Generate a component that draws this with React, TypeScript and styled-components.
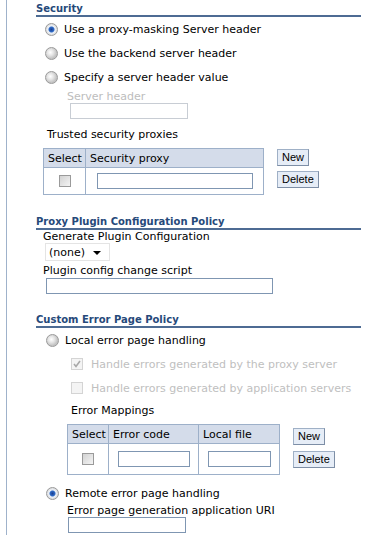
import styled, { createGlobalStyle } from 'styled-components'

const GlobalStyle = createGlobalStyle`
  body {
    margin: 0;
    background: #ffffff;
    font-family: "DejaVu Sans", Verdana, sans-serif;
    font-size: 11px;
    color: #000000;
  }
`;

const Page = styled.div`
  margin-left: 6px;
  border-left: 1px solid #9fb2cb;
  padding: 1px 0 2px 29px;
  width: 325px;
`;

const SectionTitle = styled.div<{ $top: number }>`
  margin-top: ${(p) => p.$top}px;
  font-size: 10px;
  font-weight: bold;
  line-height: 13px;
  color: #26497a;
  border-bottom: 2px solid #4d6b93;
`;

const Block = styled.div<{ $indent: number; $top?: number }>`
  margin-left: ${(p) => p.$indent}px;
  margin-top: ${(p) => p.$top ?? 0}px;
`;

const OptionRow = styled.label<{ $disabled?: boolean; $gap?: number }>`
  display: flex;
  align-items: center;
  height: 24px;
  gap: ${(p) => p.$gap ?? 6}px;
  color: ${(p) => (p.$disabled ? '#c0c0c0' : '#000000')};
`;

const Radio = styled.span<{ $on?: boolean }>`
  box-sizing: border-box;
  width: 13px;
  height: 13px;
  border-radius: 50%;
  border: 1px solid #9a9a9a;
  background: ${(p) =>
    p.$on
      ? 'radial-gradient(circle at 50% 50%, #1b3f8f 0, #2f6bc8 2.5px, #eef2f8 3.5px, #d8d8d8 6px)'
      : 'radial-gradient(circle at 40% 40%, #ffffff 0, #e6e6e6 3px, #c4c4c4 6px)'};
  flex: none;
`;

const Check = styled.span<{ $disabled?: boolean }>`
  box-sizing: border-box;
  width: 12px;
  height: 12px;
  border: 1px solid ${(p) => (p.$disabled ? '#d4d4d4' : '#9a9a9a')};
  background: ${(p) =>
    p.$disabled ? '#f4f4f4' : 'linear-gradient(135deg, #d2d2d2 0%, #f4f4f4 100%)'};
  display: flex;
  align-items: center;
  justify-content: center;
  flex: none;
`;

const Label = styled.div<{ $disabled?: boolean; $top?: number; $lh?: number }>`
  margin-top: ${(p) => p.$top ?? 0}px;
  line-height: ${(p) => p.$lh ?? 13}px;
  color: ${(p) => (p.$disabled ? '#bdbdbd' : '#000000')};
`;

const TextBox = styled.div<{ $w: number; $disabled?: boolean; $top?: number; $left?: number }>`
  box-sizing: border-box;
  margin-top: ${(p) => p.$top ?? 0}px;
  margin-left: ${(p) => p.$left ?? 0}px;
  width: ${(p) => p.$w}px;
  height: 16px;
  border: 1px solid ${(p) => (p.$disabled ? '#c8cdd4' : '#7f96b2')};
  background: #ffffff;
`;

const TableRow = styled.div<{ $top: number }>`
  display: flex;
  align-items: flex-start;
  gap: 13px;
  margin-top: ${(p) => p.$top}px;
`;

const Grid = styled.table<{ $w: number }>`
  width: ${(p) => p.$w}px;
  table-layout: fixed;
  border-collapse: collapse;
  border: 1px solid #9db0c9;
  font-size: 11px;
  flex: none;
`;

const Th = styled.th<{ $w: number }>`
  width: ${(p) => p.$w}px;
  height: 18px;
  padding: 0 4px;
  background: #d4dcea;
  border: 1px solid #9db0c9;
  font-weight: normal;
  text-align: left;
  white-space: nowrap;
`;

const Td = styled.td<{ $h: number }>`
  height: ${(p) => p.$h}px;
  padding: 0;
  border: 1px solid #9db0c9;
  border-top-color: #c3cfdf;
  vertical-align: middle;
`;

const CellBox = styled.div`
  display: flex;
  justify-content: center;
  align-items: center;
`;

const Buttons = styled.div<{ $top: number; $gap: number }>`
  display: flex;
  flex-direction: column;
  align-items: flex-start;
  gap: ${(p) => p.$gap}px;
  margin-top: ${(p) => p.$top}px;
`;

const Button = styled.button`
  font-family: "Liberation Sans", Arial, sans-serif;
  font-size: 11px;
  height: 17px;
  padding: 0 4px;
  line-height: 15px;
  color: #000000;
  background: #e6edf7;
  border: 1px solid #9fb0c6;
  border-right-color: #7d8ea6;
  border-bottom-color: #7d8ea6;
  border-radius: 0;
`;

const Select = styled.div`
  box-sizing: border-box;
  display: flex;
  align-items: center;
  gap: 8px;
  width: 65px;
  height: 18px;
  margin-left: 2px;
  padding-left: 3px;
  border: 1px solid #e4e4e4;
`;

const Arrow = styled.span`
  width: 0;
  height: 0;
  border-left: 4px solid transparent;
  border-right: 4px solid transparent;
  border-top: 4px solid #000000;
  margin-top: 2px;
`;

function CheckMark() {
  return (
    <svg width="8" height="8" viewBox="0 0 8 8">
      <path d="M1 4 L3 6.5 L7 1" fill="none" stroke="#a8a8a8" strokeWidth="1.6" />
    </svg>
  )
}

function App() {
  return (
    <>
      <GlobalStyle />
      <Page>
        <SectionTitle $top={1}>Security</SectionTitle>
        <Block $indent={9} $top={0}>
          <OptionRow><Radio $on />Use a proxy-masking Server header</OptionRow>
          <OptionRow><Radio />Use the backend server header</OptionRow>
          <OptionRow><Radio />Specify a server header value</OptionRow>
        </Block>
        <Block $indent={31}>
          <Label $disabled $top={1}>Server header</Label>
          <TextBox $w={118} $disabled $left={3} />
        </Block>
        <Block $indent={11}>
          <Label $top={9}>Trusted security proxies</Label>
        </Block>
        <Block $indent={7}>
          <TableRow $top={7}>
            <Grid $w={220}>
              <thead>
                <tr>
                  <Th $w={33}>Select</Th>
                  <Th $w={169}>Security proxy</Th>
                </tr>
              </thead>
              <tbody>
                <tr>
                  <Td $h={26}><CellBox><Check /></CellBox></Td>
                  <Td $h={26}><CellBox><TextBox $w={156} /></CellBox></Td>
                </tr>
              </tbody>
            </Grid>
            <Buttons $top={1} $gap={5}>
              <Button>New</Button>
              <Button>Delete</Button>
            </Buttons>
          </TableRow>
        </Block>

        <SectionTitle $top={20}>Proxy Plugin Configuration Policy</SectionTitle>
        <Block $indent={7}>
          <Label $top={1} $lh={12}>Generate Plugin Configuration</Label>
          <Select>(none)<Arrow /></Select>
          <Label $top={3}>Plugin config change script</Label>
          <TextBox $w={227} $top={1} $left={3} />
        </Block>

        <SectionTitle $top={19}>Custom Error Page Policy</SectionTitle>
        <Block $indent={10}>
          <OptionRow><Radio />Local error page handling</OptionRow>
        </Block>
        <Block $indent={35}>
          <OptionRow $disabled $gap={8}>
            <Check $disabled><CheckMark /></Check>Handle errors generated by the proxy server
          </OptionRow>
          <OptionRow $disabled $gap={8}>
            <Check $disabled />Handle errors generated by application servers
          </OptionRow>
          <Label $top={4}>Error Mappings</Label>
        </Block>
        <Block $indent={31}>
          <TableRow $top={7}>
            <Grid $w={212}>
              <thead>
                <tr>
                  <Th $w={32}>Select</Th>
                  <Th $w={81}>Error code</Th>
                  <Th $w={72}>Local file</Th>
                </tr>
              </thead>
              <tbody>
                <tr>
                  <Td $h={30}><CellBox><Check /></CellBox></Td>
                  <Td $h={30}><CellBox><TextBox $w={72} /></CellBox></Td>
                  <Td $h={30}><CellBox><TextBox $w={63} /></CellBox></Td>
                </tr>
              </tbody>
            </Grid>
            <Buttons $top={4} $gap={6}>
              <Button>New</Button>
              <Button>Delete</Button>
            </Buttons>
          </TableRow>
        </Block>
        <Block $indent={10} $top={6}>
          <OptionRow><Radio $on />Remote error page handling</OptionRow>
        </Block>
        <Block $indent={31}>
          <Label $lh={12}>Error page generation application URI</Label>
          <TextBox $w={118} $left={1} />
        </Block>
      </Page>
    </>
  )
}

export default App;
